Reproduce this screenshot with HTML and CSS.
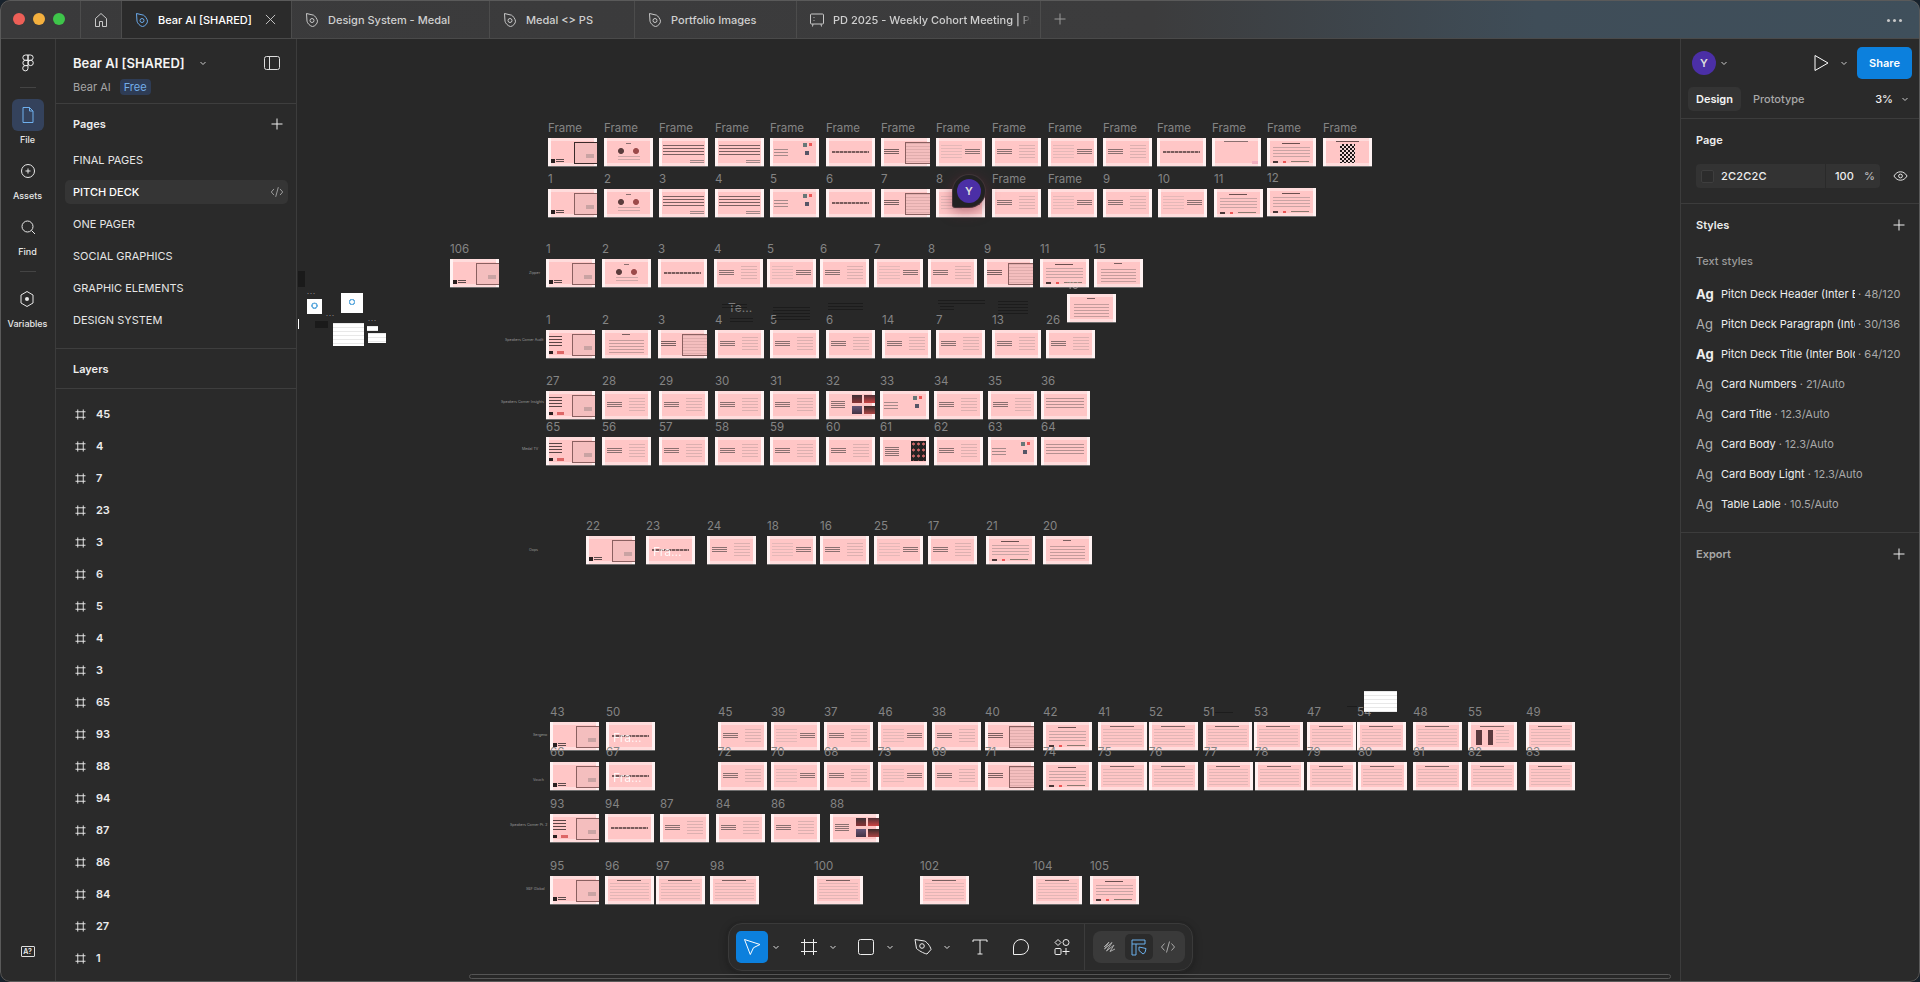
FILE: index.html
```html
<!DOCTYPE html>
<html lang="en">
<head>
<meta charset="utf-8">
<title>Bear AI [SHARED] – Figma</title>
<link rel="stylesheet" href="styles.css">
</head>
<body>
<svg class="defs" width="0" height="0" aria-hidden="true">
  <symbol id="nib" viewBox="0 0 16 16"><path d="M2.5 1.5 9.6 3.2c1 .3 3.9 4.1 3.9 6 0 2.300-2.700 5.300-5 5.300-2.100 0-5.500-3.600-5.500-5.300Z" fill="none" stroke="currentColor" stroke-linejoin="round"/><circle cx="8" cy="8.500" r="2" fill="none" stroke="currentColor"/></symbol>
  <symbol id="hash" viewBox="0 0 12 12"><path d="M3 .5v11M9 .5v11M.5 3h11M.5 9h11" fill="none" stroke="currentColor"/></symbol>
  <symbol id="caret" viewBox="0 0 8 8"><path d="m1.500 3 2.500 2.500L6.500 3" fill="none" stroke="currentColor"/></symbol>
  <symbol id="plus" viewBox="0 0 12 12"><path d="M6 .5v11M.5 6h11" fill="none" stroke="currentColor"/></symbol>
  <symbol id="code" viewBox="0 0 16 16"><path d="M4.500 4.500 1.500 8l3 3.500M11.500 4.500l3 3.500-3 3.500M9.500 2.500l-3 11" fill="none" stroke="currentColor"/></symbol>
</svg>
<div class="win">
  <header class="tabbar">
    <div class="lights"><i class="dot red"></i><i class="dot amber"></i><i class="dot green"></i></div>
    <div class="tab home"><svg class="ic16" viewBox="0 0 16 16"><path d="M2.500 6.500 8 1.500l5.500 5v8h-4v-5h-3v5h-4Z" fill="none" stroke="currentColor"/></svg></div>
    <div class="tab active w170"><svg class="ic16 blue"><use href="#nib"/></svg><span class="tabtext">Bear AI [SHARED]</span><svg class="tabx" viewBox="0 0 12 12"><path d="m1 1 10 10M11 1 1 11" fill="none" stroke="currentColor"/></svg></div>
    <div class="tab w198"><svg class="ic16"><use href="#nib"/></svg><span class="tabtext">Design System - Medal</span></div>
    <div class="tab w145"><svg class="ic16"><use href="#nib"/></svg><span class="tabtext">Medal &lt;&gt; PS</span></div>
    <div class="tab w162"><svg class="ic16"><use href="#nib"/></svg><span class="tabtext">Portfolio Images</span></div>
    <div class="tab w245"><svg class="ic16" viewBox="0 0 16 16"><path d="M2.500 2h11a1 1 0 0 1 1 1v8a1 1 0 0 1-1 1h-11a1 1 0 0 1-1-1V3a1 1 0 0 1 1-1ZM4 12l-.5 2.500M12 12l.5 2.500" fill="none" stroke="currentColor"/><path d="M5 5v.8M5 8v.8" stroke="currentColor"/></svg><span class="tabtext fade">PD 2025 - Weekly Cohort Meeting | Product</span></div>
    <svg class="tabplus"><use href="#plus"/></svg>
    <div class="tabmore"><i></i><i></i><i></i></div>
  </header>
  <div class="main">
    <nav class="rail">
      <div class="logo"><svg width="12" height="18" viewBox="0 0 12 18"><path d="M6 1H3.500a2.500 2.500 0 0 0 0 5.300H6Zm0 0h2.500a2.500 2.500 0 0 1 0 5.300H6Zm0 5.300H3.500a2.600 2.600 0 0 0 0 5.300H6Zm0 2.650a2.650 2.650 0 1 0 5.300 0 2.650 2.650 0 0 0-5.300 0ZM6 11.600H3.500A2.650 2.650 0 1 0 6 14.300Z" fill="none" stroke="#eee"/></svg></div>
      <div class="railsep"></div>
      <div class="railitem first"><div class="railbtn on"><svg width="16" height="18" viewBox="0 0 16 18"><path d="M3 1.500h6.500l3.500 3.500v11.500H3ZM9.500 1.500V5H13" fill="none" stroke="currentColor"/></svg></div><span>File</span></div>
      <div class="railitem"><div class="railbtn"><svg width="16" height="16" viewBox="0 0 16 16"><circle cx="8" cy="8" r="6.500" fill="none" stroke="currentColor"/><path d="M8 5.500v5M5.500 8h5" stroke="currentColor"/></svg></div><span>Assets</span></div>
      <div class="railitem"><div class="railbtn"><svg width="16" height="16" viewBox="0 0 16 16"><circle cx="7.500" cy="7.500" r="5.500" fill="none" stroke="currentColor"/><path d="m11.500 11.500 3.500 3.500" stroke="currentColor"/></svg></div><span>Find</span></div>
      <div class="railsep low"></div>
      <div class="railitem"><div class="railbtn"><svg width="16" height="18" viewBox="0 0 16 18"><path d="M8 1.500 14 5v8l-6 3.500L2 13V5Z" fill="none" stroke="currentColor" stroke-linejoin="round"/><circle cx="8" cy="9" r="2" fill="currentColor"/></svg></div><span>Variables</span></div>
      <div class="aq"><span>A?</span></div>
    </nav>
    <aside class="left">
      <div class="filehead">
        <div class="titlerow"><strong>Bear AI [SHARED]</strong><svg class="ic8 tcar"><use href="#caret"/></svg><svg class="panelic" viewBox="0 0 16 14"><rect x=".5" y=".5" width="15" height="13" rx="2" fill="none" stroke="currentColor"/><path d="M5.500 .5v13" stroke="currentColor"/></svg></div>
        <div class="teamrow"><span>Bear AI</span><em>Free</em></div>
      </div>
      <section class="pages">
        <div class="pageshead"><h3>Pages</h3><svg class="ic12"><use href="#plus"/></svg></div>
        <ul class="pagelist">
          <li>FINAL PAGES</li>
          <li class="cur">PITCH DECK<svg class="ic14"><use href="#code"/></svg></li>
          <li>ONE PAGER</li>
          <li>SOCIAL GRAPHICS</li>
          <li>GRAPHIC ELEMENTS</li>
          <li>DESIGN SYSTEM</li>
        </ul>
      </section>
      <div class="layershead"><h3>Layers</h3></div>
      <ul class="layers">
        <li><svg><use href="#hash"/></svg>45</li><li><svg><use href="#hash"/></svg>4</li><li><svg><use href="#hash"/></svg>7</li><li><svg><use href="#hash"/></svg>23</li><li><svg><use href="#hash"/></svg>3</li><li><svg><use href="#hash"/></svg>6</li><li><svg><use href="#hash"/></svg>5</li><li><svg><use href="#hash"/></svg>4</li><li><svg><use href="#hash"/></svg>3</li><li><svg><use href="#hash"/></svg>65</li><li><svg><use href="#hash"/></svg>93</li><li><svg><use href="#hash"/></svg>88</li><li><svg><use href="#hash"/></svg>94</li><li><svg><use href="#hash"/></svg>87</li><li><svg><use href="#hash"/></svg>86</li><li><svg><use href="#hash"/></svg>84</li><li><svg><use href="#hash"/></svg>27</li><li><svg><use href="#hash"/></svg>1</li>
      </ul>
    </aside>
    <main class="canvas">
      <div class="world">
        <!-- row 1 -->
        <div class="th a dk r1" style="left:548px"><span>Frame</span></div><div class="th p r1" style="left:604px"><span>Frame</span></div><div class="th b r1" style="left:659px"><span>Frame</span></div><div class="th b r1" style="left:715px"><span>Frame</span></div><div class="th d r1" style="left:770px"><span>Frame</span></div><div class="th h r1" style="left:826px"><span>Frame</span></div><div class="th f dk r1" style="left:881px"><span>Frame</span></div><div class="th r r1" style="left:936px"><span>Frame</span></div><div class="th l r1" style="left:992px"><span>Frame</span></div><div class="th r r1" style="left:1048px"><span>Frame</span></div><div class="th l r1" style="left:1103px"><span>Frame</span></div><div class="th h r1" style="left:1157px"><span>Frame</span></div><div class="th o r1" style="left:1212px"><span>Frame</span></div><div class="th s r1" style="left:1267px"><span>Frame</span></div><div class="th q r1" style="left:1323px"><span>Frame</span></div>
        <!-- row 2 -->
        <div class="th a r2" style="left:548px"><span>1</span></div><div class="th p r2" style="left:604px"><span>2</span></div><div class="th b r2" style="left:659px"><span>3</span></div><div class="th b r2" style="left:715px"><span>4</span></div><div class="th d r2" style="left:770px"><span>5</span></div><div class="th h r2" style="left:826px"><span>6</span></div><div class="th f r2" style="left:881px"><span>7</span></div><div class="th r r2" style="left:936px"><span>8</span></div><div class="th l r2" style="left:992px"><span>Frame</span></div><div class="th r r2" style="left:1048px"><span>Frame</span></div><div class="th l r2" style="left:1103px"><span>9</span></div><div class="th r r2" style="left:1158px"><span>10</span></div><div class="th s r2" style="left:1214px"><span>11</span></div><div class="th s r2b" style="left:1267px"><span>12</span></div>
        <!-- row 3 -->
        <div class="th a r3" style="left:450px"><span>106</span></div>
        <div class="th a r3" style="left:546px"><span>1</span></div><div class="th p r3" style="left:602px"><span>2</span></div><div class="th h r3" style="left:658px"><span>3</span></div><div class="th l r3" style="left:714px"><span>4</span></div><div class="th r r3" style="left:767px"><span>5</span></div><div class="th l r3" style="left:820px"><span>6</span></div><div class="th r r3" style="left:874px"><span>7</span></div><div class="th l r3" style="left:928px"><span>8</span></div><div class="th f r3" style="left:984px"><span>9</span></div><div class="th s r3" style="left:1040px"><span>11</span></div><div class="th o2 r3" style="left:1094px"><span>15</span></div>
        <div class="th o2 r3b" style="left:1067px"><span class="faint">10</span></div>
        <!-- row 4 -->
        <div class="th e r4" style="left:546px"><span>1</span></div><div class="th o2 r4" style="left:602px"><span>2</span></div><div class="th f r4" style="left:658px"><span>3</span></div><div class="th l r4" style="left:715px"><span>4</span></div><div class="th l r4" style="left:770px"><span>5</span></div><div class="th l r4" style="left:826px"><span>6</span></div><div class="th l r4" style="left:882px"><span>14</span></div><div class="th l r4" style="left:936px"><span>7</span></div><div class="th l r4" style="left:992px"><span>13</span></div><div class="th l r4" style="left:1046px"><span>26</span></div>
        <!-- row 5 -->
        <div class="th e r5" style="left:546px"><span>27</span></div><div class="th l r5" style="left:602px"><span>28</span></div><div class="th l r5" style="left:659px"><span>29</span></div><div class="th l r5" style="left:715px"><span>30</span></div><div class="th l r5" style="left:770px"><span>31</span></div><div class="th x r5" style="left:826px"><span>32</span></div><div class="th d r5" style="left:880px"><span>33</span></div><div class="th l r5" style="left:934px"><span>34</span></div><div class="th l r5" style="left:988px"><span>35</span></div><div class="th b2 r5" style="left:1041px"><span>36</span></div>
        <!-- row 6 -->
        <div class="th e r6" style="left:546px"><span>65</span></div><div class="th l r6" style="left:602px"><span>56</span></div><div class="th l r6" style="left:659px"><span>57</span></div><div class="th l r6" style="left:715px"><span>58</span></div><div class="th l r6" style="left:770px"><span>59</span></div><div class="th l r6" style="left:826px"><span>60</span></div><div class="th n r6" style="left:880px"><span>61</span></div><div class="th l r6" style="left:934px"><span>62</span></div><div class="th d r6" style="left:988px"><span>63</span></div><div class="th b2 r6" style="left:1041px"><span>64</span></div>
        <!-- row 7 -->
        <div class="th a r7" style="left:586px"><span>22</span></div><div class="th h r7" style="left:646px"><span>23</span><b class="fra">Fra...</b></div><div class="th l r7" style="left:707px"><span>24</span></div><div class="th r r7" style="left:767px"><span>18</span></div><div class="th l r7" style="left:820px"><span>16</span></div><div class="th r r7" style="left:874px"><span>25</span></div><div class="th l r7" style="left:928px"><span>17</span></div><div class="th s r7" style="left:986px"><span>21</span></div><div class="th o2 r7" style="left:1043px"><span>20</span></div>
        <!-- row 8 -->
        <div class="th a r8" style="left:550px"><span>43</span></div><div class="th h r8" style="left:606px"><span>50</span><b class="fra">Fra...</b></div><div class="th l r8" style="left:718px"><span>45</span></div><div class="th r r8" style="left:771px"><span>39</span></div><div class="th l r8" style="left:824px"><span>37</span></div><div class="th r r8" style="left:878px"><span>46</span></div><div class="th l r8" style="left:932px"><span>38</span></div><div class="th f r8" style="left:985px"><span>40</span></div><div class="th s r8" style="left:1043px"><span>42</span></div><div class="th t r8" style="left:1098px"><span>41</span></div><div class="th t r8" style="left:1149px"><span>52</span></div><div class="th t r8" style="left:1203px"><span>51</span></div><div class="th t r8" style="left:1254px"><span>53</span></div><div class="th t r8" style="left:1307px"><span>47</span></div><div class="th t r8" style="left:1357px"><span>54</span></div><div class="th t r8" style="left:1413px"><span>48</span></div><div class="th y r8" style="left:1468px"><span>55</span></div><div class="th t r8" style="left:1526px"><span>49</span></div>
        <!-- row 9 -->
        <div class="th a r9" style="left:550px"><span>66</span></div><div class="th h r9" style="left:606px"><span>67</span><b class="fra">Fra...</b></div><div class="th l r9" style="left:718px"><span>72</span></div><div class="th r r9" style="left:771px"><span>70</span></div><div class="th l r9" style="left:824px"><span>68</span></div><div class="th r r9" style="left:878px"><span>73</span></div><div class="th l r9" style="left:932px"><span>69</span></div><div class="th f r9" style="left:985px"><span>71</span></div><div class="th s r9" style="left:1043px"><span>74</span></div><div class="th t r9" style="left:1098px"><span>75</span></div><div class="th t r9" style="left:1149px"><span>76</span></div><div class="th t r9" style="left:1204px"><span>77</span></div><div class="th t r9" style="left:1255px"><span>78</span></div><div class="th t r9" style="left:1307px"><span>79</span></div><div class="th t r9" style="left:1358px"><span>80</span></div><div class="th t r9" style="left:1413px"><span>81</span></div><div class="th t r9" style="left:1468px"><span>82</span></div><div class="th t r9" style="left:1526px"><span>83</span></div>
        <!-- row 10 -->
        <div class="th e r10" style="left:550px"><span>93</span></div><div class="th h r10" style="left:605px"><span>94</span></div><div class="th l r10" style="left:660px"><span>87</span></div><div class="th l r10" style="left:716px"><span>84</span></div><div class="th l r10" style="left:771px"><span>86</span></div><div class="th x r10" style="left:830px"><span>88</span></div>
        <!-- row 11 -->
        <div class="th a r11" style="left:550px"><span>95</span></div><div class="th t r11" style="left:605px"><span>96</span></div><div class="th t r11" style="left:656px"><span>97</span></div><div class="th t r11" style="left:710px"><span>98</span></div><div class="th t r11" style="left:814px"><span>100</span></div><div class="th t r11" style="left:920px"><span>102</span></div><div class="th t r11" style="left:1033px"><span>104</span></div><div class="th s r11" style="left:1090px"><span>105</span></div>
        <!-- row captions -->
        <small class="cap" style="left:529px;top:270px">Zipper</small><small class="cap" style="left:505px;top:337px">Speakers Corner Audit</small><small class="cap" style="left:501px;top:399px">Speakers Corner Insights</small><small class="cap" style="left:522px;top:446px">Medal TV</small><small class="cap" style="left:529px;top:547px">Oops</small><small class="cap" style="left:533px;top:732px">Sergeno</small><small class="cap" style="left:533px;top:777px">Vouch</small><small class="cap" style="left:510px;top:822px">Speakers Corner Pt. 2</small><small class="cap" style="left:526px;top:886px">SBF Global</small>
        <small class="te" style="left:728px;top:301px">Te...</small>
        <!-- loose items -->
        <div class="wn dkb" style="left:298px;top:271px;width:7px;height:16px"></div>
        <div class="wn" style="left:298px;top:319px;width:1px;height:10px"></div>
        <div class="wn ring" style="left:307px;top:299px;width:15px;height:15px"></div>
        <div class="wn ring" style="left:341px;top:293px;width:22px;height:20px"></div>
        <div class="wn dkb" style="left:315px;top:321px;width:13px;height:7px"></div>
        <div class="wn lined" style="left:333px;top:323px;width:31px;height:23px"></div>
        <div class="wn lined" style="left:367px;top:326px;width:11px;height:5px"></div>
        <div class="wn lined" style="left:368px;top:333px;width:18px;height:10px"></div>
        <div class="wn lined" style="left:1364px;top:691px;width:33px;height:21px"></div>
        <small class="dots" style="left:307px;top:288px">...</small><small class="dots" style="left:326px;top:310px">...</small><small class="dots" style="left:368px;top:315px">...</small>
        <div class="blk" style="left:722px;top:304px;width:25px;height:4px"></div><div class="blk" style="left:730px;top:318px;width:23px;height:5px"></div><div class="blk" style="left:773px;top:307px;width:37px;height:15px"></div><div class="blk" style="left:828px;top:303px;width:35px;height:9px"></div><div class="blk" style="left:938px;top:300px;width:47px;height:4px"></div><div class="blk" style="left:940px;top:306px;width:14px;height:4px"></div><div class="blk" style="left:998px;top:301px;width:30px;height:13px"></div><div class="blk" style="left:1215px;top:712px;width:18px;height:1px"></div><div class="blk" style="left:1347px;top:706px;width:10px;height:1px"></div>
        <!-- collaborator cursor -->
        <div class="pin"><span>Y</span></div>
      </div>
      <div class="toolbar">
        <div class="tool"><button class="tbtn sel"><svg width="20" height="20" viewBox="0 0 20 20"><path d="M2.500 2.500 18 7.500l-6.500 3.200-3.200 6.800Z" fill="none" stroke="#fff" stroke-linejoin="round"/></svg></button><svg class="tcaret"><use href="#caret"/></svg></div>
        <div class="tool"><button class="tbtn"><svg width="18" height="18" viewBox="0 0 18 18"><path d="M4.500 1v16M13.500 1v16M1 4.500h16M1 13.500h16" fill="none" stroke="#eee"/></svg></button><svg class="tcaret"><use href="#caret"/></svg></div>
        <div class="tool"><button class="tbtn"><svg width="18" height="18" viewBox="0 0 18 18"><rect x="1.500" y="1.500" width="15" height="15" rx="2" fill="none" stroke="#eee"/></svg></button><svg class="tcaret"><use href="#caret"/></svg></div>
        <div class="tool"><button class="tbtn"><svg width="20" height="20" viewBox="0 0 20 20"><path d="M2 2.500 11.500 4c1.500.3 6 5 6.500 8.500l-4 4.500C10.500 16.500 5 13 3.500 11.500Z" fill="none" stroke="#eee" stroke-linejoin="round"/><circle cx="9" cy="9" r="2.300" fill="none" stroke="#eee"/></svg></button><svg class="tcaret"><use href="#caret"/></svg></div>
        <button class="tbtn"><svg width="18" height="18" viewBox="0 0 18 18"><path d="M2 4V2h14v2M9 2v14M6.500 16h5" fill="none" stroke="#eee"/></svg></button>
        <button class="tbtn"><svg width="18" height="18" viewBox="0 0 18 18"><path d="M1.500 16.500V9a7.500 7.500 0 1 1 7.500 7.500Z" fill="none" stroke="#eee" stroke-linejoin="round"/></svg></button>
        <button class="tbtn"><svg width="18" height="18" viewBox="0 0 18 18"><path d="m5 1.500 3 3-3 3-3-3Z" fill="none" stroke="#eee"/><circle cx="13" cy="4.500" r="3" fill="none" stroke="#eee"/><rect x="2" y="10.500" width="6" height="6" rx="1" fill="none" stroke="#eee"/><path d="M13 10v7M9.500 13.500h7" stroke="#eee"/></svg></button>
        <div class="tsep"></div>
        <div class="modes">
          <button class="mode"><svg width="16" height="16" viewBox="0 0 16 16"><path d="M2 8 7 3 2.500 10 10 3.500 4.500 12 12 6 8 12.500l5-2.500" fill="none" stroke="#aaa"/></svg></button>
          <button class="mode on"><svg width="18" height="18" viewBox="0 0 18 18"><path d="M2 2h13v4H6v11H2ZM2 6h4" fill="none" stroke="#6bb0ec"/><path d="m9 9 7 1.500-1 4-2 1.500-4-3.500Z" fill="none" stroke="#6bb0ec" stroke-linejoin="round"/></svg></button>
          <button class="mode"><svg width="16" height="16"><use href="#code"/></svg></button>
        </div>
      </div>
      <div class="help">?</div>
      <div class="hscroll"></div>
    </main>
    <aside class="right">
      <div class="rhead">
        <div class="avatar">Y</div><svg class="ic8"><use href="#caret"/></svg>
        <svg class="play" viewBox="0 0 16 18"><path d="M2 1.500 15 9 2 16.500Z" fill="none" stroke="#fff" stroke-linejoin="round"/></svg><svg class="ic8"><use href="#caret"/></svg>
        <div class="share">Share</div>
      </div>
      <div class="rtabs"><span class="rtab on">Design</span><span class="rtab">Prototype</span><span class="zoomv">3%<svg class="ic8"><use href="#caret"/></svg></span></div>
      <section class="rsec page">
        <h4>Page</h4>
        <div class="fieldrow">
          <div class="field"><i class="swatch"></i><span class="hex">2C2C2C</span><span class="num">100</span><span class="pct">%</span></div>
          <svg class="eye" viewBox="0 0 16 12"><path d="M1 6c3.500-6 10.500-6 14 0-3.500 6-10.500 6-14 0Z" fill="none" stroke="#eee"/><circle cx="8" cy="6" r="2" fill="none" stroke="#eee"/></svg>
        </div>
      </section>
      <section class="rsec styles">
        <div class="rowhead"><h4>Styles</h4><svg class="ic12"><use href="#plus"/></svg></div>
        <div class="sub">Text styles</div>
        <ul class="stylelist">
          <li><b class="ag bold">Ag</b><span class="nm clip">Pitch Deck Header (Inter ExtraBold)</span><span class="mt">&nbsp;· 48/120</span></li>
          <li><b class="ag">Ag</b><span class="nm clip">Pitch Deck Paragraph (Inter Regular)</span><span class="mt">&nbsp;· 30/136</span></li>
          <li><b class="ag bold">Ag</b><span class="nm clip">Pitch Deck Title (Inter Bold)</span><span class="mt">&nbsp;· 64/120</span></li>
          <li><b class="ag">Ag</b><span class="nm">Card Numbers</span><span class="mt">&nbsp;· 21/Auto</span></li>
          <li><b class="ag">Ag</b><span class="nm">Card Title</span><span class="mt">&nbsp;· 12.3/Auto</span></li>
          <li><b class="ag">Ag</b><span class="nm">Card Body</span><span class="mt">&nbsp;· 12.3/Auto</span></li>
          <li><b class="ag">Ag</b><span class="nm">Card Body Light</span><span class="mt">&nbsp;· 12.3/Auto</span></li>
          <li><b class="ag">Ag</b><span class="nm">Table Lable</span><span class="mt">&nbsp;· 10.5/Auto</span></li>
        </ul>
      </section>
      <section class="export"><div class="rowhead"><h4 class="dim">Export</h4><svg class="ic12"><use href="#plus"/></svg></div></section>
    </aside>
  </div>
</div>
</body>
</html>
```
FILE: styles.css
```css
*{box-sizing:border-box}
html,body{margin:0;height:100%;overflow:hidden}
body{background:#18222c;font-family:Inter,"Liberation Sans",sans-serif;color:#eee;font-size:11px}
h3,h4{margin:0;font-size:11px;font-weight:600}
ul{list-style:none;margin:0;padding:0}
button{border:0;background:none;padding:0;display:flex;align-items:center;justify-content:center;color:inherit}
.defs{position:absolute}
.win{position:relative;height:982px;border-radius:10px;overflow:hidden;background:#282828;display:flex;flex-direction:column}
.win::after{content:"";position:absolute;inset:0;border:1px solid #5a5a5a;border-radius:10px;pointer-events:none}

/* tabs */
.tabbar{height:39px;flex:none;display:flex;border-bottom:1px solid #4a4a4a;background:linear-gradient(90deg,#3a3a3b 0,#3c3c3d 60%,#3f4d58 80%,#3f4f5b 100%);position:relative}
.lights{width:80px;display:flex;align-items:center;gap:8px;padding-left:13px}
.dot{width:12px;height:12px;border-radius:50%}
.red{background:#ed5f57}.amber{background:#f4b03e}.green{background:#3ec54a}
.tab{display:flex;align-items:center;border-left:1px solid #4c4c4c;padding:1px 0 0 12px;gap:8px;color:#cfcfcf;font-size:11px;font-weight:500;height:38px;overflow:hidden}
.home{width:41px;padding-left:12px}
.w170{width:170px}.w198{width:198px}.w145{width:145px}.w162{width:162px}.w245{width:245px;border-right:1px solid #4c4c4c}
.active{background:#2b2b2b;color:#fff;position:relative}
.tabtext{white-space:nowrap}
.fade{width:198px;overflow:hidden;-webkit-mask-image:linear-gradient(90deg,#000 94%,transparent)}
.ic16{width:16px;height:16px;flex:none;color:#c8c8c8}
.blue{color:#6aa9ea}
.tabx{width:11px;height:11px;margin-left:auto;margin-right:15px;color:#cfcfcf;flex:none}
.tabplus{width:12px;height:12px;margin:13px 0 0 13px;color:#9a9a9a}
.tabmore{position:absolute;right:18px;top:19px;display:flex;gap:3px}
.tabmore i{width:3px;height:3px;border-radius:50%;background:#c8c8c8}

.main{flex:1;display:flex;min-height:0}

/* rail */
.rail{width:56px;flex:none;border-right:1px solid #3c3c3c;background:#2a2a2a;display:flex;flex-direction:column;align-items:center;padding-bottom:25px}
.logo{height:48px;display:flex;align-items:center;justify-content:center}
.railsep{width:16px;height:1px;background:#444;margin-bottom:11px}
.railsep.low{margin:4px 0 11px}
.railitem{display:flex;flex-direction:column;align-items:center;margin-bottom:9px;color:#e8e8e8}
.railitem span{font-size:9px;font-weight:500;line-height:12px;margin-top:3px}
.railbtn{width:32px;height:32px;border-radius:6px;display:flex;align-items:center;justify-content:center}
.railbtn.on{background:#34425c;color:#6fb0ee}
.aq{margin-top:auto;width:14px;height:11px;border:1px solid #ddd;border-radius:1px;display:flex;align-items:center;justify-content:center}
.aq span{font-size:7px;line-height:1;font-weight:600}

/* left panel */
.left{width:241px;flex:none;border-right:1px solid #3c3c3c;background:#2a2a2a;display:flex;flex-direction:column}
.filehead{height:65px;flex:none;border-bottom:1px solid #3e3e3e;padding:15px 16px 0 17px}
.titlerow{display:flex;align-items:center;height:18px}
.titlerow strong{font-size:13px;font-weight:600;color:#f4f4f4}
.ic8{width:8px;height:8px;flex:none;color:#ccc;margin-left:8px}
.tcar{margin-left:14px}
.panelic{width:16px;height:14px;margin-left:auto;color:#ddd}
.teamrow{display:flex;align-items:center;gap:9px;margin-top:7px;font-size:11px;color:#a6a6a6}
.teamrow em{font-style:normal;background:#2e3c55;color:#74aeea;height:16px;line-height:16px;padding:0 4px;border-radius:4px}
.pages{height:244px;flex:none;overflow:hidden}
.pageshead{height:40px;display:flex;align-items:center;justify-content:space-between;padding:0 13px 0 17px}
.ic12{width:12px;height:12px;color:#eee;flex:none}
.pagelist li{height:32px;display:flex;align-items:center;padding-left:17px;color:#e6e6e6;font-size:11px;font-weight:400;position:relative;isolation:isolate}
.pagelist .cur{color:#fff;font-weight:500}
.pagelist .cur::before{content:"";position:absolute;left:9px;right:8px;top:4px;bottom:4px;background:#353535;border-radius:5px;z-index:-1}
.pagelist .cur svg{position:absolute;right:12px;top:9px;color:#aaa}
.ic14{width:14px;height:14px}
.layershead{height:41px;flex:none;border-top:1px solid #3e3e3e;border-bottom:1px solid #3e3e3e;display:flex;align-items:center;padding-left:17px}
.layers li{height:32px;display:flex;align-items:center;padding-left:19px;gap:10px;font-size:11px;font-weight:600;color:#ececec}
.layers svg{width:11px;height:11px;color:#eee;flex:none}
.layers{margin-top:9px;overflow:hidden}

/* canvas */
.canvas{flex:1;position:relative;background:#282828;overflow:hidden;min-width:0}
.world{position:absolute;left:-297px;top:-39px;width:1920px;height:982px}
.th{position:absolute;width:49px;height:28px;background-color:#ffc6c6;background-image:linear-gradient(90deg,#fff2f2 3px,transparent 3px,transparent 46px,#fff2f2 46px),linear-gradient(#ffdcdc 3px,transparent 3px,transparent 25px,#ffdcdc 25px);box-shadow:0 1px 0 #6e6e6e}
.th>span{position:absolute;left:0;top:-17px;font-size:11.5px;line-height:14px;color:#848484;white-space:nowrap}
.th>span.faint{color:#ecd9d9;opacity:.5;top:-16px}
.fra{position:absolute;left:7px;top:9px;font-size:12px;line-height:14px;font-weight:400;color:#fff;opacity:.85}
.r1{top:138px}.r2{top:189px}.r2b{top:188px}.r3{top:259px}.r3b{top:294px}.r4{top:330px}.r5{top:391px}.r6{top:437px}.r7{top:536px}.r8{top:722px}.r9{top:762px}.r10{top:814px}.r11{top:876px}
.th::before,.th::after{content:"";position:absolute}
.a::before{left:3px;bottom:3px;width:13px;height:4px;background:linear-gradient(#2a2020,#2a2020) 0 0/4px 4px no-repeat,repeating-linear-gradient(#5c4b4b 0 1px,transparent 1px 2px) 5px 0/8px 4px no-repeat}
.a::after,.e::after{right:0;top:4px;width:22px;height:20px;border:1px solid #8a6060;border-right:0;background:#f4bebe linear-gradient(#c9a3a3 0 0) 11px 11px/8px 4px no-repeat}
.dk::after{border-color:#3a2a2a;border-width:1px 0 1.500px 1.500px}
.e::before{left:3px;top:6px;width:16px;height:18px;background:linear-gradient(#2a2020,#2a2020) 0 15px/4px 3px no-repeat,linear-gradient(#d66,#d66) 8px 15px/7px 3px no-repeat,repeating-linear-gradient(#5a4444 0 1px,transparent 1px 3px) 0 0/13px 10px no-repeat}
.p::before{left:0;top:5px;width:49px;height:18px;background:radial-gradient(circle at 17px 8px,#5a3c3c 2.500px,transparent 3.500px),radial-gradient(circle at 32px 8px,#9c4a4a 2.500px,transparent 3.500px),repeating-linear-gradient(#cfa8a8 0 1px,transparent 1px 3px) 14px 13px/22px 4px no-repeat}
.p::after{left:22px;top:5px;width:5px;height:1px;background:#8a7070}
.b::before{left:4px;top:7px;width:41px;height:11px;background:repeating-linear-gradient(#7a6060 0 1px,transparent 1px 3px)}
.b::after{right:4px;bottom:3px;width:14px;height:3px;background:repeating-linear-gradient(#a08888 0 1px,transparent 1px 2px)}
.d::before{left:4px;top:11px;width:14px;height:9px;background:repeating-linear-gradient(#a58a8a 0 1px,transparent 1px 3px)}
.d::after{right:7px;top:5px;width:9px;height:12px;background:linear-gradient(#677,#677) 0 0/4px 4px no-repeat,linear-gradient(#e55,#e55) 6px 0/3px 3px no-repeat,linear-gradient(#556,#556) 2px 8px/4px 4px no-repeat}
.h::before{left:6px;top:13px;width:37px;height:1.500px;background:repeating-linear-gradient(90deg,#7a5c5c 0 3px,#c49a9a 3px 4px)}
.f::before{left:3px;top:11px;width:15px;height:6px;background:repeating-linear-gradient(#7a6060 0 1px,transparent 1px 2px)}
.f::after{right:0;top:4px;width:24px;height:20px;border:1px solid #8a6060;border-right:0;background:#f4bebe repeating-linear-gradient(#e0adad 0 1px,transparent 1px 3px)}
.l::before{left:5px;top:11px;width:15px;height:6px;background:repeating-linear-gradient(#8a7070 0 1px,transparent 1px 2px)}
.l::after{left:27px;top:7px;width:16px;height:15px;background:repeating-linear-gradient(#dcb0b0 0 1px,transparent 1px 3px)}
.r::before{right:5px;top:11px;width:15px;height:5px;background:repeating-linear-gradient(#8a7070 0 1px,transparent 1px 2px)}
.r::after{left:5px;top:7px;width:21px;height:15px;background:repeating-linear-gradient(#e4b8b8 0 1px,transparent 1px 3px)}
.o::before{left:12px;top:3px;width:24px;height:1px;background:#8a7070}
.o::after{right:3px;bottom:2px;width:6px;height:3px;background:#f2b0c0}
.o2::before{left:20px;top:4px;width:8px;height:1px;background:#7a6060}
.o2::after{left:7px;top:10px;width:35px;height:13px;background:repeating-linear-gradient(#c49c9c 0 1px,transparent 1px 3px)}
.s::before{left:15px;top:5px;width:18px;height:1px;background:#6a5050}
.s::after{left:6px;top:9px;width:37px;height:16px;background:linear-gradient(#4a3838,#4a3838) 0 14px/5px 2px no-repeat,linear-gradient(#e55,#e55) 10px 14px/3px 2px no-repeat,linear-gradient(#8a7a70,#8a7a70) 18px 14px/18px 1px no-repeat,repeating-linear-gradient(#c9a4a4 0 1px,transparent 1px 3px) 0 0/37px 11px no-repeat}
.t::before{left:12px;top:4px;width:24px;height:1px;background:#7a6060}
.t::after{left:5px;top:7px;width:39px;height:18px;background:repeating-linear-gradient(#e2b6b6 0 1px,transparent 1px 3px)}
.y::before{left:12px;top:4px;width:24px;height:1px;background:#7a6060}
.y::after{left:8px;top:8px;width:33px;height:15px;background:linear-gradient(#5a3a3e,#5a3a3e) 0 0/6px 15px no-repeat,linear-gradient(#5a3a3e,#5a3a3e) 12px 0/5px 15px no-repeat,repeating-linear-gradient(#e2b6b6 0 1px,transparent 1px 3px) 20px 0/13px 15px no-repeat}
.b2::before{left:5px;top:7px;width:38px;height:10px;background:repeating-linear-gradient(#b49090 0 1px,transparent 1px 3px)}
.x::before{left:5px;top:10px;width:14px;height:7px;background:repeating-linear-gradient(#8a7070 0 1px,transparent 1px 2px)}
.x::after{left:26px;top:4px;width:23px;height:20px;background:linear-gradient(#3e3238,#8a3236) 0 0/10px 8px no-repeat,linear-gradient(#503036,#c44) 12px 0/11px 8px no-repeat,linear-gradient(#657,#434) 0 11px/10px 8px no-repeat,linear-gradient(#3a2a2a,#a44) 12px 11px/11px 8px no-repeat}
.n::before{left:5px;top:10px;width:14px;height:9px;background:repeating-linear-gradient(#8a7070 0 1px,transparent 1px 2px)}
.n::after{left:31px;top:4px;width:15px;height:20px;background:#242222 radial-gradient(#c66 1px,transparent 1.500px) 0 0/5px 6px}
.q::before{left:13px;top:3px;width:23px;height:1px;background:#6a5050}
.q::after{left:17px;top:6px;width:15px;height:19px;background:repeating-conic-gradient(#1c1616 0 25%,#f0d6d6 0 50%) 0 0/4px 4px}
.cap{position:absolute;font-size:3.600px;line-height:6px;color:#9a9a9a;white-space:nowrap}
.te{position:absolute;font-size:12px;line-height:14px;color:#7c7c7c}
.wn{position:absolute;background:#fff}
.dkb{background:#1a1a1a}
.ring{background:#fff radial-gradient(circle at 50% 45%,#fff 1.500px,#6ab0e0 2px,#6ab0e0 3px,transparent 3.500px)}
.lined{background:#fff repeating-linear-gradient(#e8e8e8 0 1px,transparent 1px 4px)}
.dots{position:absolute;font-size:7px;line-height:8px;letter-spacing:1px;color:#9a9a9a}
.blk{position:absolute;background:repeating-linear-gradient(#1c1c1c 0 1px,transparent 1px 3px)}
.pin{position:absolute;left:953px;top:175px;width:32px;height:32px;border-radius:50% 50% 50% 2px;background:#222;box-shadow:0 4px 14px rgba(120,40,60,.6),0 0 0 1px #383838;display:flex;align-items:center;justify-content:center}
.pin span{width:24px;height:24px;border-radius:50%;background:#4b2fa6;display:flex;align-items:center;justify-content:center;font-size:11px;font-weight:600;color:#ddd}

/* toolbar */
.toolbar{position:absolute;left:431px;top:884px;width:465px;height:48px;border-radius:14px;background:#2b2b2b;border:1px solid #3a3a3a;box-shadow:0 0 0 2px #242424,0 2px 8px rgba(0,0,0,.35);display:flex;align-items:center;gap:9px;padding-left:7px}
.tool{display:flex;align-items:center}
.tbtn{width:32px;height:32px;border-radius:5px}
.sel{background:#0c80dd}
.tcaret{width:8px;height:8px;margin:0 4px;color:#ddd;flex:none}
.tsep{width:1px;height:46px;background:#3c3c3c;margin-left:-3px}
.modes{display:flex;align-items:center;width:92px;height:32px;background:#3a3a3a;border-radius:8px;margin-left:-1px;padding:0 3px;gap:0}
.mode{width:29px;height:26px;border-radius:5px;color:#aaa}
.mode.on{background:#2b2b2b}
.help{position:absolute;left:1566px;top:888px;width:32px;height:32px;border-radius:50%;background:#2b2b2b;border:1px solid #3c3c3c;display:flex;align-items:center;justify-content:center;font-size:14px;color:#eee}
.hscroll{position:absolute;left:172px;right:9px;bottom:3px;height:5px;border:1px solid #555;border-radius:3px}

/* right panel */
.right{width:240px;flex:none;border-left:1px solid #3c3c3c;background:#2a2a2a;display:flex;flex-direction:column}
.rhead{height:48px;flex:none;display:flex;align-items:center;padding:0 8px 0 11px}
.rhead .ic8{margin-left:4px}
.avatar{width:24px;height:24px;border-radius:50%;background:#4b2fa6;display:flex;align-items:center;justify-content:center;font-weight:600;color:#ddd;font-size:11px}
.play{width:16px;height:18px;margin-left:85px}
.play + .ic8{margin-left:11px}
.share{margin-left:auto;width:55px;height:32px;border-radius:5px;background:#0c80dd;display:flex;align-items:center;justify-content:center;font-weight:600;color:#fff;font-size:11px}
.rtabs{height:32px;flex:none;display:flex;align-items:flex-start;padding:0 11px 0 7px;border-bottom:1px solid #3c3c3c;font-size:11px;font-weight:500;color:#a8a8a8}
.rtab{height:24px;line-height:24px;padding:0 8px;border-radius:5px;margin-right:4px}
.rtab.on{background:#343434;color:#f4f4f4;font-weight:600}
.zoomv{margin-left:auto;height:24px;display:flex;align-items:center;color:#eee}
.rsec{border-bottom:1px solid #3c3c3c;padding:0 0 0 15px}
.page{height:85px}
.page h4{height:45px;line-height:43px}
.fieldrow{display:flex;align-items:center}
.field{width:184px;height:24px;background:#333;border-radius:4px;display:flex;align-items:center;padding-left:5px;font-size:11px;font-weight:500;color:#eee;position:relative}
.swatch{width:13px;height:13px;background:#2c2c2c;border:1px solid #3e3e3e;border-radius:2px}
.hex{margin-left:7px;width:104px;letter-spacing:.2px}
.num{border-left:1px solid #2a2a2a;height:24px;line-height:24px;padding-left:9px;width:39px}
.pct{color:#bbb}
.eye{width:15px;height:12px;margin-left:13px}
.styles{height:329px}
.rowhead{display:flex;align-items:center;justify-content:space-between;height:41px;padding-right:15px}
.sub{height:31px;line-height:32px;color:#9b9b9b;font-weight:500}
.stylelist{margin-top:3px}
.stylelist li{height:30px;display:flex;align-items:center;font-size:11px;font-weight:400;color:#eee;white-space:nowrap}
.ag{width:25px;flex:none;font-size:13px;font-weight:400;color:#b0b0b0;line-height:1}
.ag.bold{font-weight:700;color:#eee}
.clip{display:block;width:134px;overflow:hidden}
.mt{color:#a9a9a9}
.export{padding-left:15px}
.dim{color:#a8a8a8}
```
